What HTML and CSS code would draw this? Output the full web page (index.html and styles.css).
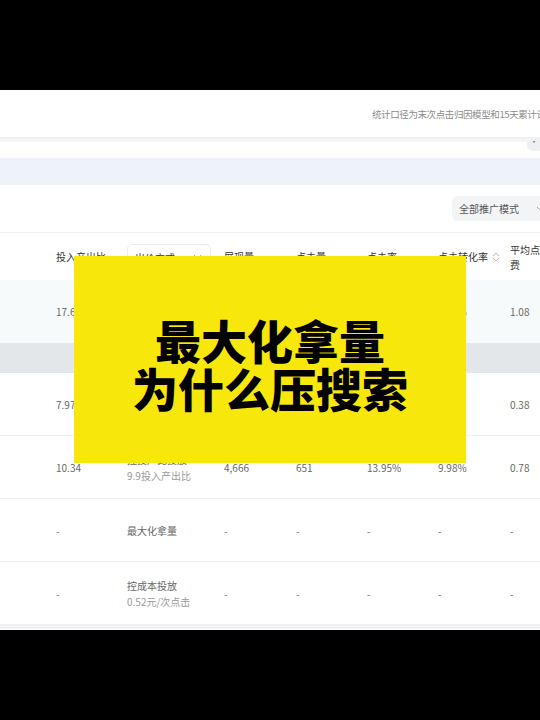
FILE: index.html
```html
<!DOCTYPE html>
<html lang="zh">
<head>
<meta charset="utf-8">
<link rel="stylesheet" href="styles.css">
</head>
<body>
<div class="screen">
  <div class="topbar">
    <span class="note">统计口径为末次点击归因模型和15天累计计算</span>
  </div>
  <div class="shadowline"><span class="pill">···</span></div>
  <div class="gap"></div>
  <div class="blueband"></div>
  <div class="toolbar">
    <div class="select">全部推广模式<svg width="9" height="6" viewBox="0 0 9 6"><path d="M1 1l3.5 3.5L8 1" fill="none" stroke="#aaa" stroke-width="1"/></svg></div>
  </div>
  <div class="row head">
    <div></div>
    <div class="h">投入产出比<svg class="sort" width="8" height="6" viewBox="0 0 8 6"><path d="M1 5l3-3 3 3" fill="none" stroke="#bbb" stroke-width="1"/></svg></div>
    <div class="h"><span class="bidbox">出价方式<svg width="9" height="6" viewBox="0 0 9 6"><path d="M1 1l3.5 3.5L8 1" fill="none" stroke="#aaa" stroke-width="1"/></svg></span></div>
    <div class="h">展现量<svg class="sort" width="8" height="6" viewBox="0 0 8 6"><path d="M1 5l3-3 3 3" fill="none" stroke="#bbb" stroke-width="1"/></svg></div>
    <div class="h">点击量<svg class="sort" width="8" height="6" viewBox="0 0 8 6"><path d="M1 5l3-3 3 3" fill="none" stroke="#bbb" stroke-width="1"/></svg></div>
    <div class="h">点击率<svg class="sort" width="8" height="6" viewBox="0 0 8 6"><path d="M1 5l3-3 3 3" fill="none" stroke="#bbb" stroke-width="1"/></svg></div>
    <div class="h">点击转化率<svg class="sort" width="8" height="10" viewBox="0 0 8 10"><path d="M1 4l3-3 3 3M1 6l3 3 3-3" fill="none" stroke="#bbb" stroke-width="1"/></svg></div>
    <div class="h two">平均点击花<br>费</div>
  </div>
  <div class="row data tint">
    <div></div><div>17.65</div><div></div><div></div><div></div><div></div><div>8.56%</div><div>1.08</div>
  </div>
  <div class="grayband"></div>
  <div class="row data">
    <div></div><div>7.97</div><div></div><div></div><div></div><div></div><div></div><div>0.38</div>
  </div>
  <div class="row data">
    <div></div><div>10.34</div>
    <div class="stack"><span>控投产比投放</span><span class="sub">9.9投入产出比</span></div>
    <div>4,666</div><div>651</div><div>13.95%</div><div>9.98%</div><div>0.78</div>
  </div>
  <div class="row data">
    <div></div><div>-</div><div>最大化拿量</div><div>-</div><div>-</div><div>-</div><div>-</div><div>-</div>
  </div>
  <div class="row data last">
    <div></div><div>-</div>
    <div class="stack"><span>控成本投放</span><span class="sub">0.52元/次点击</span></div>
    <div>-</div><div>-</div><div>-</div><div>-</div><div>-</div>
  </div>
  <div class="footband"></div>

  <div class="cover">
    <div class="title">最大化拿量<br>为什么压搜索</div>
  </div>
</div>
</body>
</html>
```
FILE: styles.css
```css
* { box-sizing: border-box; }
html, body { margin: 0; padding: 0; background: #000; }
body { font-family: "Noto Sans CJK SC", "Noto Sans", sans-serif; }
.screen {
  position: relative;
  margin-top: 90px;
  width: 540px;
  height: 540px;
  background: #fff;
  overflow: hidden;
}
.topbar {
  height: 47px;
  display: flex;
  align-items: center;
  padding-left: 372px;
  white-space: nowrap;
}
.note { font-size: 9.5px; color: #8a8a8a; letter-spacing: -0.4px; }
.shadowline {
  height: 5px;
  background: linear-gradient(#efefef, #f8f8f8);
  position: relative;
}
.pill {
  position: absolute;
  left: 527px;
  top: 1px;
  width: 30px;
  height: 13px;
  border-radius: 6px;
  background: #eef0f2;
  font-size: 8px;
  line-height: 8px;
  color: #666;
  padding-left: 3px;
}
.gap { height: 16px; }
.blueband { height: 27px; background: #eef3fb; }
.toolbar {
  height: 48px;
  display: flex;
  align-items: center;
  padding-left: 452px;
  border-bottom: 1px solid #eef0f2;
}
.select {
  flex: none;
  width: 100px;
  height: 25px;
  border-radius: 6px;
  background: #f2f4f6;
  display: flex;
  align-items: center;
  gap: 17px;
  padding-left: 7px;
  font-size: 10px;
  color: #555;
  white-space: nowrap;
}
.row {
  display: grid;
  grid-template-columns: 56px 71px 97px 72px 71px 71px 72px 40px;
  align-items: center;
  font-size: 10px;
  color: #666;
  white-space: nowrap;
}
.head { height: 47px; color: #333; }
.h { display: flex; align-items: center; gap: 4px; }
.sort { flex: none; }
.two { line-height: 15px; font-size: 10px; display: block; }
.bidbox {
  display: flex;
  align-items: center;
  justify-content: space-between;
  width: 84px;
  height: 26px;
  margin-top: 1px;
  padding: 0 8px 0 7px;
  border: 1px solid #ececec;
  border-radius: 5px;
  background: #fff;
}
.data { height: 63px; border-bottom: 1px solid #eef0f2; }
.tint { background: #f7fafa; border-bottom: none; }
.grayband { height: 30px; background: #e4e7ea; }
.last { height: 62px; border-bottom: none; }
.stack { display: flex; flex-direction: column; gap: 3px; line-height: 13px; }
.sub { color: #9a9a9a; }
.footband { height: 5px; background: #f1f2f3; }
.cover {
  position: absolute;
  left: 74px;
  top: 166px;
  width: 392px;
  height: 207px;
  background: #f8e70a;
  display: flex;
  align-items: center;
  justify-content: center;
}
.title {
  font-family: "Noto Sans CJK SC", sans-serif;
  font-weight: 900;
  font-size: 46px;
  line-height: 48px;
  color: #000;
  text-align: center;
  margin-top: 6px;
}
```
